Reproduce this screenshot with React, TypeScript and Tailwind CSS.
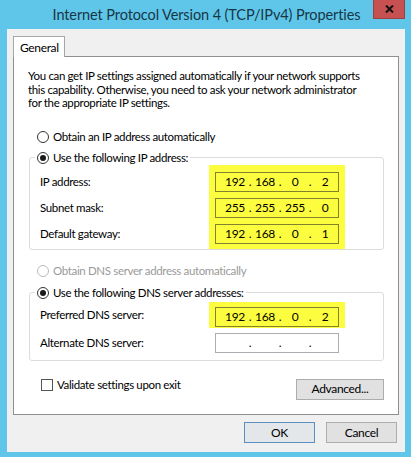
import React from 'react';

const font = "font-['Lato',sans-serif]";

function Radio({ checked, disabled }: { checked?: boolean; disabled?: boolean }) {
  return (
    <span
      className={`w-[12px] h-[12px] rounded-full border bg-white flex items-center justify-center shrink-0 ${
        disabled ? 'border-[#bcbcbc]' : 'border-[#333333]'
      }`}
    >
      {checked && <span className="w-[6px] h-[6px] rounded-full bg-[#1a1a1a]" />}
    </span>
  );
}

function IpBox({ values, marked }: { values: string[]; marked?: boolean }) {
  return (
    <div
      className={`w-[124px] h-[20px] border flex items-center pl-[6px] text-[12px] ${
        marked ? 'border-[#82822c] bg-[#fdfd40]' : 'border-[#abadb3] bg-white'
      }`}
    >
      {values.map((v, i) => (
        <React.Fragment key={i}>
          <span className="w-[26px] text-center">{v}</span>
          {i < 3 && <span className="w-[4px] text-center">.</span>}
        </React.Fragment>
      ))}
    </div>
  );
}

function Button({ label, primary, className = '' }: { label: string; primary?: boolean; className?: string }) {
  return (
    <div
      className={`h-[21px] border flex items-center justify-center text-[12px] ${
        primary ? 'border-[#5b8fbf] bg-[#e3e7ea]' : 'border-[#adadad] bg-[#e1e1e1]'
      } ${className}`}
    >
      {label}
    </div>
  );
}

export default function App() {
  return (
    <div className={`w-[411px] h-[457px] bg-[#5fc6e9] flex flex-col text-black whitespace-nowrap tracking-[-0.35px] ${font}`}>
      {/* title bar */}
      <div className="relative h-[29px] flex items-center justify-center shrink-0">
        <span className="text-[14.5px] tracking-[-0.1px] text-[#173646] pl-[2px]">Internet Protocol Version 4 (TCP/IPv4) Properties</span>
        <div className="absolute right-[6px] top-0 w-[32px] h-[19px] bg-[#c75050] border border-[#9b3f3f] border-t-0 flex items-center justify-center">
          <svg width="9" height="8" viewBox="0 0 9 8">
            <path d="M1 0.5 L8 7.5 M8 0.5 L1 7.5" stroke="#111" strokeWidth="2" />
          </svg>
        </div>
      </div>

      {/* window body */}
      <div className="flex-1 ml-[7px] mr-[6px] mb-[5px] bg-[#f0f0f0] pt-[7px] px-[6px] flex flex-col">
        <div className="relative z-10 w-[52px] h-[21px] -mb-px bg-white border border-b-0 border-[#a6a6a6] pl-[6px] pt-[2px] text-[12px]">
          General
        </div>

        <div className="h-[359px] shrink-0 bg-white border border-[#8e8f8f] flex flex-col">
          <p className="pl-[14px] pt-[12px] text-[11.5px] leading-[13.5px]">
            You can get IP settings assigned automatically if your network supports
            <br />
            this capability. Otherwise, you need to ask your network administrator
            <br />
            for the appropriate IP settings.
          </p>

          <div className="pl-[15px] pr-[14px] flex flex-col text-[11.5px]">
            <div className="mt-[20px] ml-[8px] h-[14px] flex items-center gap-[4px]">
              <Radio />
              <span>Obtain an IP address automatically</span>
            </div>

            <fieldset className="mt-[7px] border border-[#dcdcdc] rounded-[3px] px-[7px]">
              <legend className="-ml-[2px] px-[2px] h-[14px] flex items-center gap-[4px]">
                <Radio checked />
                <span>Use the following IP address:</span>
              </legend>
              <div className="flex">
                <div className="ml-[3px] w-[169px] pt-[7px] flex flex-col gap-[6px]">
                  <div className="h-[20px] flex items-center">IP address:</div>
                  <div className="h-[20px] flex items-center">Subnet mask:</div>
                  <div className="h-[20px] flex items-center">Default gateway:</div>
                </div>
                <div className="bg-[#fdfd40] px-[6px] pt-[7px] pb-[5px] flex flex-col gap-[6px]">
                  <IpBox marked values={['192', '168', '0', '2']} />
                  <IpBox marked values={['255', '255', '255', '0']} />
                  <IpBox marked values={['192', '168', '0', '1']} />
                </div>
              </div>
            </fieldset>

            <div className="mt-[14px] ml-[8px] h-[14px] flex items-center gap-[4px] text-[#9a9a9a]">
              <Radio disabled />
              <span>Obtain DNS server address automatically</span>
            </div>

            <fieldset className="mt-[8px] border border-[#dcdcdc] rounded-[3px] px-[7px] pb-[7px]">
              <legend className="-ml-[2px] px-[2px] h-[14px] flex items-center gap-[4px]">
                <Radio checked />
                <span>Use the following DNS server addresses:</span>
              </legend>
              <div className="mt-[2px] flex items-center">
                <div className="ml-[3px] w-[169px]">Preferred DNS server:</div>
                <div className="bg-[#fdfd40] px-[6px] pt-[5px] pb-[1px]">
                  <IpBox marked values={['192', '168', '0', '2']} />
                </div>
              </div>
              <div className="mt-[5px] flex items-center">
                <div className="ml-[3px] w-[175px]">Alternate DNS server:</div>
                <IpBox values={['', '', '', '']} />
              </div>
            </fieldset>

            <div className="mt-[18px] flex items-start justify-between">
              <div className="ml-[12px] h-[12px] flex items-center gap-[4px]">
                <span className="w-[12px] h-[12px] border border-[#555555] bg-white shrink-0" />
                <span>Validate settings upon exit</span>
              </div>
              <Button label="Advanced..." className="w-[88px]" />
            </div>
          </div>
        </div>

        <div className="mt-[7px] mr-[2px] flex justify-end gap-[11px]">
          <Button primary label="OK" className="w-[71px]" />
          <Button label="Cancel" className="w-[71px]" />
        </div>
      </div>
    </div>
  );
}
